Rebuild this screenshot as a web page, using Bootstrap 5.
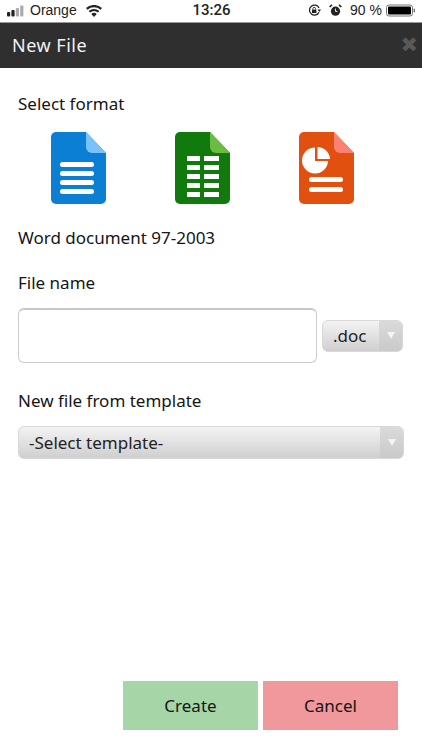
<!DOCTYPE html>
<html lang="en">
<head>
  <meta charset="UTF-8">
  <title>New File</title>
  <link href="https://cdn.jsdelivr.net/npm/bootstrap@5.3.2/dist/css/bootstrap.min.css" rel="stylesheet">
  <style>
    html, body { height: 100%; }
    body {
      background: #fff;
      color: #151515;
      font-family: "Noto Sans", "Open Sans", sans-serif;
      font-size: 17px;
      overflow: hidden;
    }
    .app-page { height: 750px; }
    .status-bar {
      height: 23px;
      padding: 0 6px 1px 7px;
      font-family: "Liberation Sans", sans-serif;
      font-size: 14px;
      color: #222;
      border-bottom: 1px solid #999;
    }
    .status-left { width: 165px; }
    .status-carrier { margin-left: 4px; }
    .status-time { font-family: Roboto, sans-serif; font-weight: 500; width: 80px; text-align: center; font-size: 15px; color: #222; }
    .status-right { width: 165px; }
    .title-bar {
      height: 45px;
      background: #2f2f2f;
      color: #f2f2f2;
      padding: 0 4px 0 12px;
      font-size: 18px;
      letter-spacing: .5px;
    }
    .close-mark { color: #585858; font-family: "DejaVu Sans", sans-serif; font-weight: 700; font-size: 21px; line-height: 1; letter-spacing: 0; }
    .form-area { padding: 24px 18px 0 18px; }
    .field-label { line-height: 23px; }
    .format-row { margin-top: 17px; padding-left: 33px; gap: 69px; }
    .format-row svg { display: block; }
    .format-name { margin-top: 22px; }
    .name-label { margin-top: 22px; }
    .name-row { margin-top: 14px; }
    .name-input {
      width: 299px;
      height: 55px;
      border: 1px solid #ccc;
      border-top: 2px solid #c8c8c8;
      border-radius: 6px;
      background: #fff;
    }
    .pick-box {
      display: flex;
      align-items: stretch;
      border-radius: 6px;
      background: linear-gradient(#f3f3f3, #cfcfcf);
      border: 1px solid #d8d8d8;
      color: #222;
      font-size: 17px;
    }
    .pick-text { flex: 1; display: flex; align-items: center; padding-left: 10px; }
    .pick-arrow {
      width: 23px;
      background: linear-gradient(#dadada, #cacaca);
      border-radius: 0 5px 5px 0;
      display: flex;
      align-items: center;
      justify-content: center;
    }
    .pick-arrow::after {
      content: "";
      border-left: 4px solid transparent;
      border-right: 4px solid transparent;
      border-top: 7px solid #f4f4f4;
    }
    .ext-pick { width: 81px; height: 32px; margin-left: 5px; }
    .template-label { margin-top: 26px; }
    .template-pick { width: 386px; height: 33px; margin-top: 14px; }
    .action-row { padding: 0 24px 20px 0; gap: 5px; }
    .action-btn {
      width: 135px;
      height: 49px;
      border: 0;
      border-radius: 0;
      color: #151515;
      font-size: 17px;
    }
    .action-create, .action-create:hover { background: #a6d5a8; color: #151515; }
    .action-cancel, .action-cancel:hover { background: #f0989b; color: #151515; }
  </style>
</head>
<body>

<div class="app-page d-flex flex-column">
  <!-- iOS status bar -->
  <div class="status-bar d-flex align-items-center justify-content-between">
    <div class="status-left d-flex align-items-center">
      <svg width="19" height="12" viewBox="0 0 19 12">
        <rect x="0" y="7" width="3.2" height="4.5" rx="1" fill="#222"/>
        <rect x="4.4" y="5" width="3.2" height="6.5" rx="1" fill="#222"/>
        <rect x="8.8" y="3" width="3.2" height="8.5" rx="1" fill="#aaa"/>
        <rect x="13.2" y="0.5" width="3.2" height="11" rx="1" fill="#aaa"/>
      </svg>
      <span class="status-carrier">Orange</span>
      <svg class="ms-2" width="18" height="12" viewBox="0 0 17 12">
        <path d="M8.5 12 L5.8 8.9 A4 4 0 0 1 11.2 8.9 Z" fill="#222"/>
        <path d="M4.6 7.6 L3.2 6 A8 8 0 0 1 13.8 6 L12.4 7.6 A6 6 0 0 0 4.6 7.6 Z" fill="#222"/>
        <path d="M2 4.7 L.5 3 A12 12 0 0 1 16.5 3 L15 4.7 A10 10 0 0 0 2 4.7 Z" fill="#222"/>
      </svg>
    </div>
    <div class="status-time">13:26</div>
    <div class="status-right d-flex align-items-center justify-content-end">
      <svg width="13" height="13" viewBox="0 0 13 13">
        <path d="M11 8.2 A5 5 0 1 1 11 4" fill="none" stroke="#222" stroke-width="1.3"/>
        <path d="M9.6 5.6 H13 L11.3 8 Z" fill="#222"/>
        <rect x="4" y="5.6" width="4.4" height="3.4" fill="#222"/>
        <path d="M4.9 5.6 V4.6 A1.3 1.3 0 0 1 7.5 4.6 V5.6" fill="none" stroke="#222" stroke-width=".9"/>
      </svg>
      <svg class="ms-2" width="13" height="13" viewBox="0 0 13 13">
        <circle cx="6.5" cy="7.2" r="4.6" fill="#222"/>
        <path d="M6.5 4.6 V7.4 H8.6" fill="none" stroke="#fff" stroke-width=".9"/>
        <path d="M.6 3 L3 .8 M12.4 3 L10 .8" stroke="#222" stroke-width="1.6"/>
      </svg>
      <span class="ms-2">90 %</span>
      <svg class="ms-1" width="30" height="13" viewBox="0 0 30 13">
        <rect x=".5" y="1" width="26" height="11" rx="2.5" fill="none" stroke="#777"/>
        <rect x="2" y="2.5" width="23" height="8" rx="1" fill="#000"/>
        <rect x="27.6" y="4.5" width="1.4" height="4" rx=".7" fill="#777"/>
      </svg>
    </div>
  </div>

  <!-- Title -->
  <div class="title-bar d-flex align-items-center justify-content-between">
    <span>New File</span>
    <span class="close-mark">&#10006;</span>
  </div>

  <!-- Form -->
  <div class="form-area">
    <div class="field-label">Select format</div>

    <div class="format-row d-flex">
      <svg width="55" height="72" viewBox="0 0 55 72">
        <path d="M5 0 H35 L55 21 V67 A5 5 0 0 1 50 72 H5 A5 5 0 0 1 0 67 V5 A5 5 0 0 1 5 0 Z" fill="#0a7fd4"/>
        <path d="M35 0 L55 21 H41 A6 6 0 0 1 35 15 Z" fill="#79c2fb"/>
        <rect x="9" y="30" width="34" height="5" rx="2.5" fill="#fff"/>
        <rect x="9" y="39" width="34" height="5" rx="2.5" fill="#fff"/>
        <rect x="9" y="48" width="34" height="5" rx="2.5" fill="#fff"/>
        <rect x="9" y="57" width="34" height="5" rx="2.5" fill="#fff"/>
      </svg>
      <svg width="55" height="72" viewBox="0 0 55 72">
        <path d="M5 0 H35 L55 21 V67 A5 5 0 0 1 50 72 H5 A5 5 0 0 1 0 67 V5 A5 5 0 0 1 5 0 Z" fill="#117a0c"/>
        <path d="M35 0 L55 21 H41 A6 6 0 0 1 35 15 Z" fill="#6cbc3f"/>
        <g fill="#fff">
          <rect x="12" y="24" width="13" height="5"/><rect x="29" y="24" width="15" height="5"/>
          <rect x="12" y="33" width="13" height="5"/><rect x="29" y="33" width="15" height="5"/>
          <rect x="12" y="42" width="13" height="5"/><rect x="29" y="42" width="15" height="5"/>
          <rect x="12" y="51" width="13" height="5"/><rect x="29" y="51" width="15" height="5"/>
          <rect x="12" y="60" width="13" height="5"/><rect x="29" y="60" width="15" height="5"/>
        </g>
      </svg>
      <svg width="55" height="72" viewBox="0 0 55 72">
        <path d="M5 0 H35 L55 21 V67 A5 5 0 0 1 50 72 H5 A5 5 0 0 1 0 67 V5 A5 5 0 0 1 5 0 Z" fill="#e1500f"/>
        <path d="M35 0 L55 21 H41 A6 6 0 0 1 35 15 Z" fill="#fb8272"/>
        <path d="M16 15.5 V29 H29 A13 13 0 1 1 16 15.5 Z" fill="#fff"/>
        <path d="M18.5 15 A13 13 0 0 1 31 27 H18.5 Z" fill="#fff"/>
        <rect x="10" y="45" width="34" height="5" rx="2.5" fill="#fff"/>
        <rect x="10" y="55" width="34" height="5" rx="2.5" fill="#fff"/>
      </svg>
    </div>

    <div class="field-label format-name">Word document 97-2003</div>

    <div class="field-label name-label">File name</div>
    <div class="name-row d-flex align-items-center">
      <div class="name-input"></div>
      <div class="pick-box ext-pick">
        <div class="pick-text">.doc</div>
        <div class="pick-arrow"></div>
      </div>
    </div>

    <div class="field-label template-label">New file from template</div>
    <div class="pick-box template-pick">
      <div class="pick-text">-Select template-</div>
      <div class="pick-arrow"></div>
    </div>
  </div>

  <!-- Actions -->
  <div class="action-row d-flex justify-content-end mt-auto">
    <button type="button" class="btn action-btn action-create">Create</button>
    <button type="button" class="btn action-btn action-cancel">Cancel</button>
  </div>
</div>

<script src="https://cdn.jsdelivr.net/npm/bootstrap@5.3.2/dist/js/bootstrap.bundle.min.js"></script>
</body>
</html>
